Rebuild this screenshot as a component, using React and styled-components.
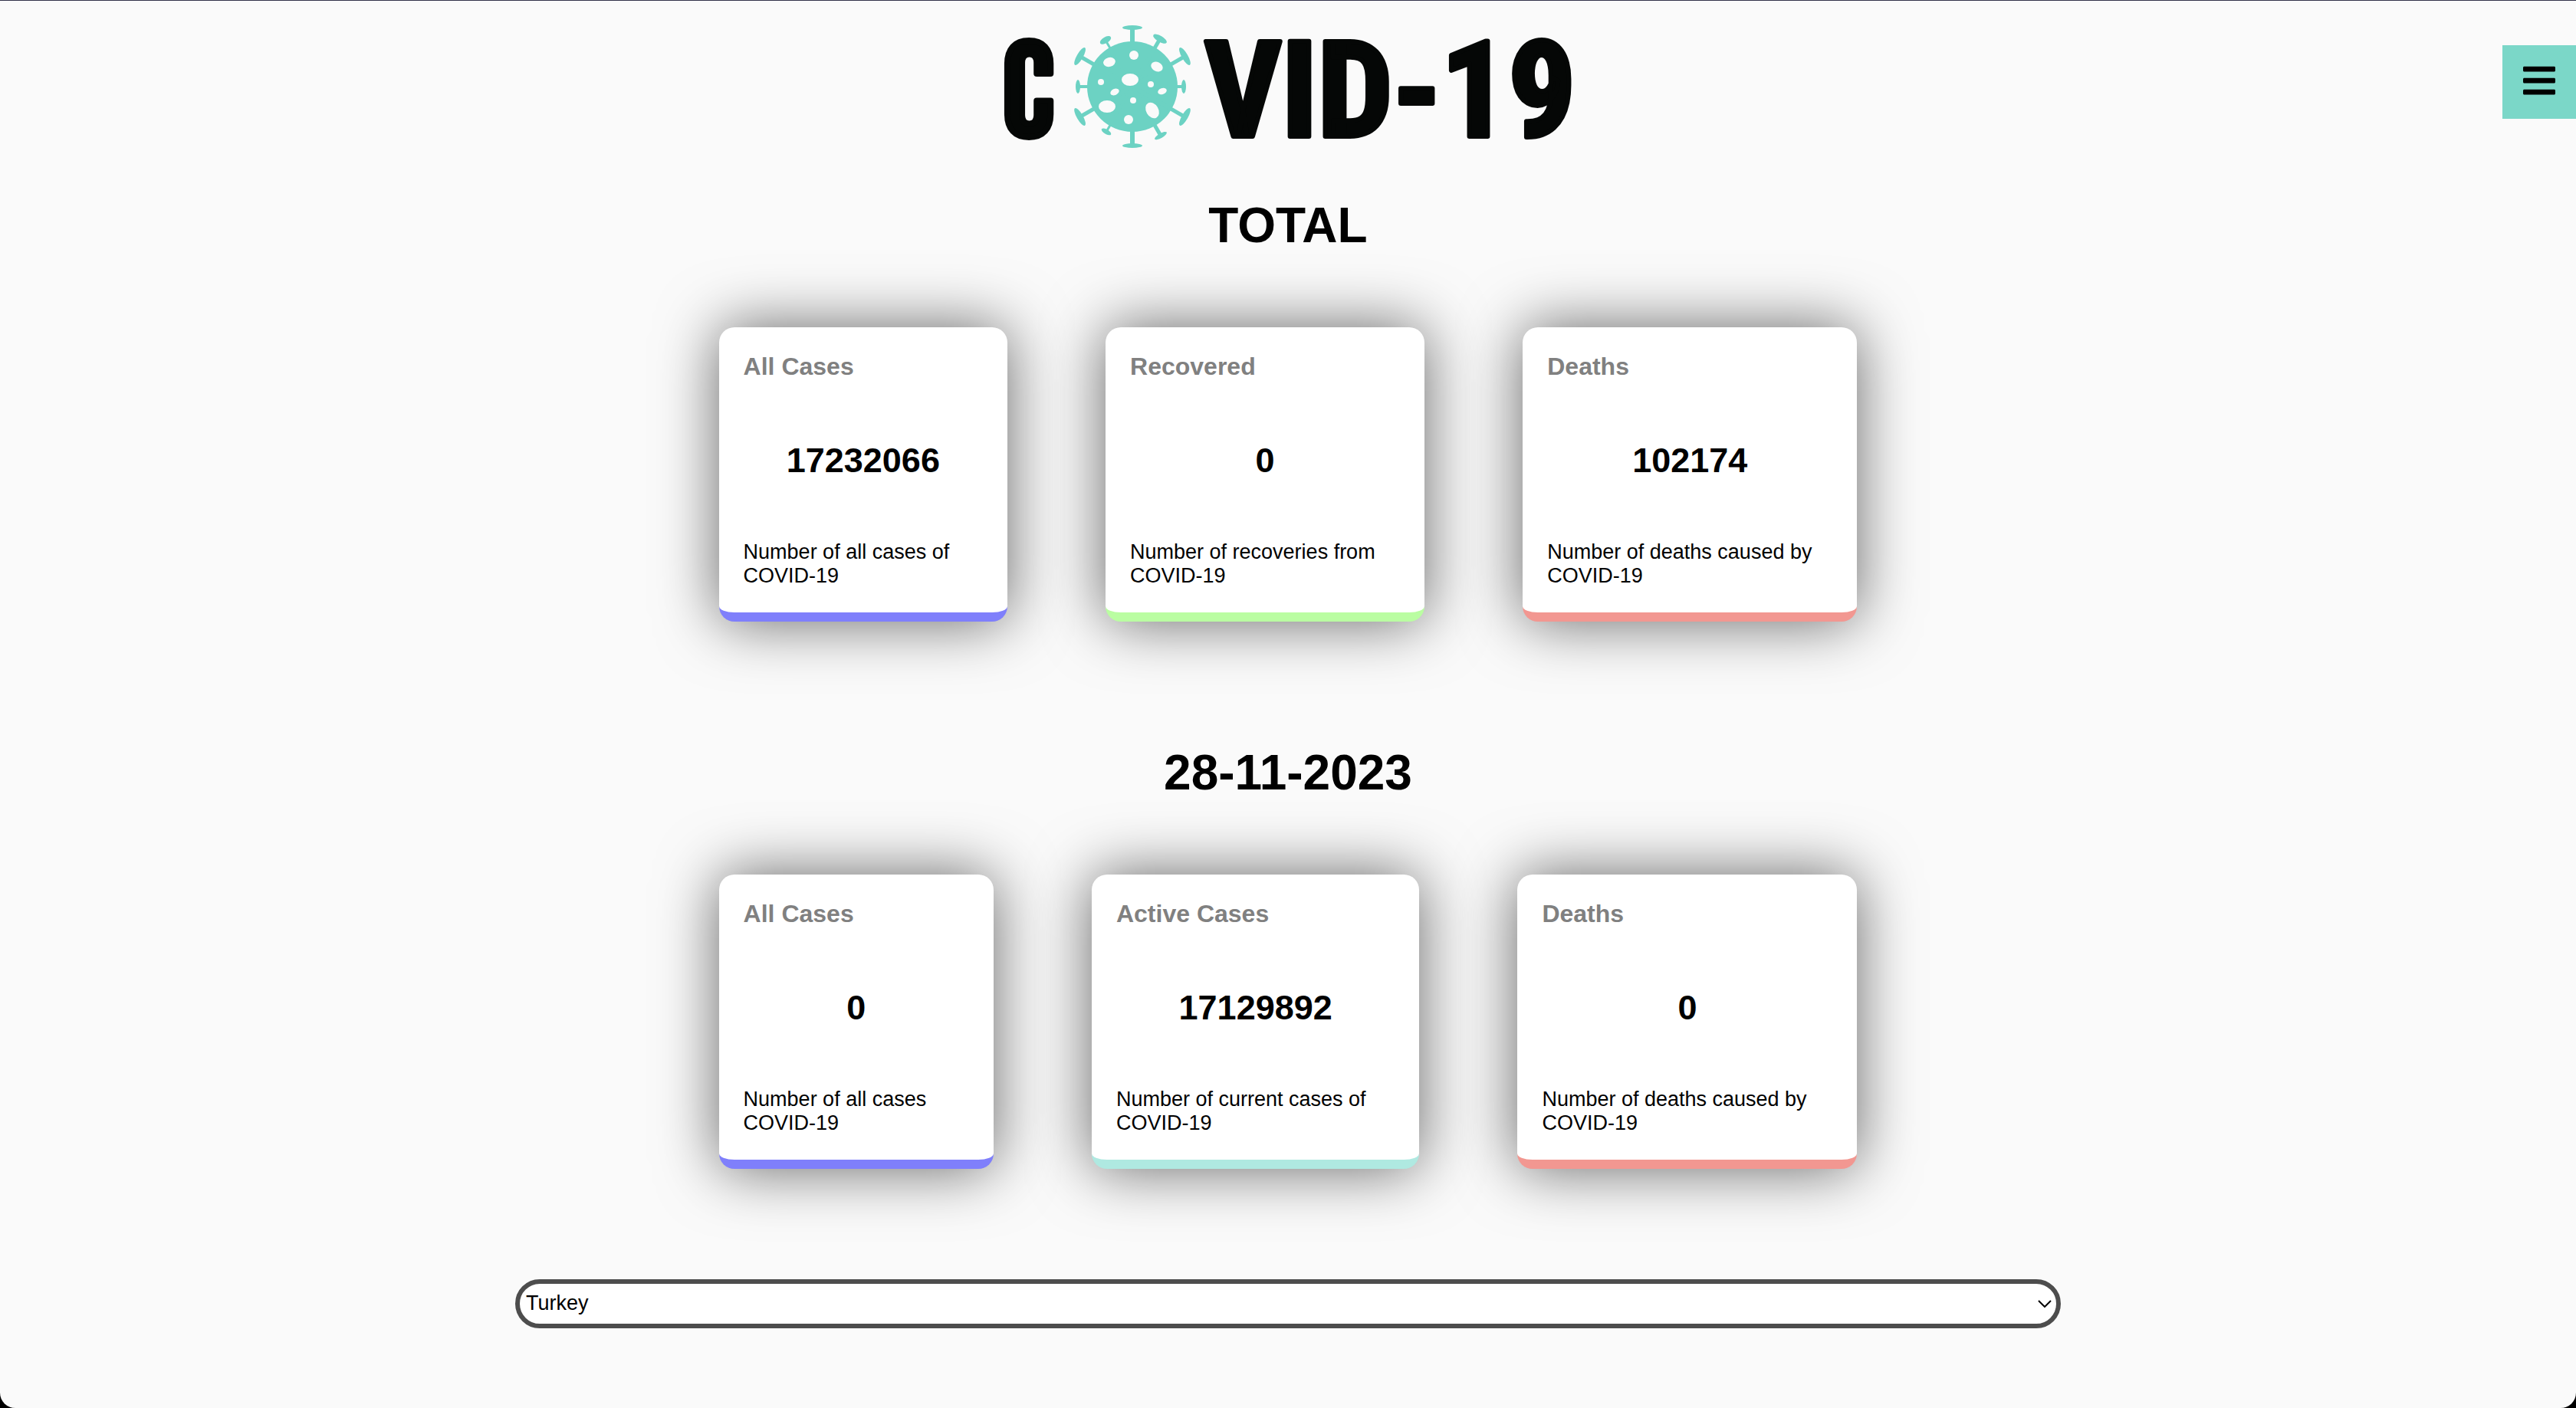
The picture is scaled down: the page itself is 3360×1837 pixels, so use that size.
import React from "react";
import styled, { createGlobalStyle } from "styled-components";
import { FaBars } from "react-icons/fa";

const GlobalStyle = createGlobalStyle`
  *, *::before, *::after { box-sizing: border-box; }
  body {
    margin: 0;
    background: #000;
    font-family: "Liberation Sans", Arial, Helvetica, sans-serif;
    color: #000;
  }
  h1, h2, h3, p { margin: 0; }
`;

const Page = styled.div`
  min-height: 100vh;
  display: flex;
  flex-direction: column;
  align-items: center;
  padding-top: 32px;
  background: #fafafa;
  border-top: 1px solid #33334a;
  border-radius: 0 0 20px 20px;
`;

const Logo = styled.svg`
  display: block;
  width: 760px;
  height: 160px;
  overflow: visible;
`;

const LogoText = styled.text`
  font-family: ${(p) => (p.$narrow ? '"Bebas Neue", ' : "")}"Roboto Condensed", "Liberation Sans", sans-serif;
  font-size: 174px;
  font-weight: ${(p) => (p.$narrow ? 400 : 700)};
  fill: #050706;
  stroke: #050706;
  stroke-width: ${(p) => (p.$narrow ? 8 : 6)}px;
  stroke-linejoin: round;
`;

const MenuButton = styled.button`
  position: fixed;
  top: 59px;
  right: 0;
  width: 96px;
  height: 96px;
  display: flex;
  align-items: center;
  justify-content: center;
  padding: 0 0 4px;
  border: 0;
  background: #7bd7c8;
  color: #000;
  cursor: pointer;
`;

const Main = styled.main`
  width: 60%;
  display: flex;
  flex-direction: column;
  align-items: center;
`;

const Section = styled.section`
  width: 80%;
  display: flex;
  flex-direction: column;
  align-items: center;
  gap: 96px;
  padding-top: 64px;
  padding-bottom: 96px;
`;

const Title = styled.h1`
  font-size: 64px;
  line-height: 74px;
  font-weight: 700;
`;

const Cards = styled.div`
  width: 100%;
  display: flex;
  gap: 128px;
  padding: 0 64px;
`;

const Card = styled.article`
  display: flex;
  flex-direction: column;
  gap: 78px;
  padding: 32px;
  background: #fff;
  border-bottom: 12px solid ${(p) => p.$accent};
  border-radius: 20px;
  box-shadow: 0 0 80px rgba(0, 0, 0, 0.6);
`;

const CardLabel = styled.h2`
  font-size: 32px;
  line-height: 38px;
  font-weight: 700;
  color: #808080;
`;

const CardValue = styled.h3`
  font-size: 45px;
  line-height: 52px;
  font-weight: 700;
  text-align: center;
`;

const CardText = styled.p`
  font-size: 27px;
  line-height: 31px;
`;

const SelectWrap = styled.div`
  width: 100%;
  display: grid;
  align-items: center;
  margin-top: 48px;
  margin-bottom: 104px;

  > * { grid-area: 1 / 1; }
`;

const CountrySelect = styled.select`
  width: 100%;
  height: 64px;
  padding: 0 48px 2px 8px;
  border: 6px solid #4d4d4d;
  border-radius: 32px;
  background: #fff;
  color: #000;
  font-family: inherit;
  font-size: 27px;
  appearance: none;
`;

const Chevron = styled.svg`
  width: 18px;
  height: 10px;
  margin-right: 12px;
  justify-self: end;
  pointer-events: none;
`;

const TEAL = "#6cd2c3";

function Spike({ angle, reach, foot, thick, stem }) {
  return (
    <g transform={`rotate(${angle} 177 80)`}>
      <rect x={177 - stem / 2} y={80 - reach} width={stem} height={reach} />
      <ellipse cx="177" cy={80 - reach} rx={foot} ry={thick} />
    </g>
  );
}

const spikes = [
  { angle: 0, reach: 77, foot: 13, thick: 3, stem: 6 },
  { angle: 180, reach: 77, foot: 13, thick: 3, stem: 6 },
  { angle: 60, reach: 79, foot: 13, thick: 4, stem: 5 },
  { angle: 120, reach: 79, foot: 13, thick: 4, stem: 5 },
  { angle: 240, reach: 79, foot: 13, thick: 4, stem: 5 },
  { angle: 300, reach: 79, foot: 13, thick: 4, stem: 5 },
  { angle: 90, reach: 67, foot: 9, thick: 3, stem: 4 },
  { angle: 270, reach: 71, foot: 9, thick: 3, stem: 4 },
  { angle: 30, reach: 72, foot: 10, thick: 4, stem: 5 },
  { angle: 150, reach: 74, foot: 9, thick: 3, stem: 5 },
  { angle: 210, reach: 68, foot: 7, thick: 3, stem: 3 },
  { angle: 330, reach: 70, foot: 8, thick: 4, stem: 3 },
];

const craters = [
  [179, 39, 6, 6, 0],
  [147, 48, 8, 6, -15],
  [209, 54, 8, 6, 25],
  [174, 71, 11, 8, 0],
  [136, 74, 4, 4, 0],
  [201, 77, 4, 4, 0],
  [154, 87, 6, 4, -25],
  [216, 86, 6, 4, -20],
  [178, 98, 4, 4, 0],
  [144, 106, 11, 8, 0],
  [203, 111, 8, 11, -30],
  [172, 123, 6, 6, 0],
];

function CovidLogo() {
  return (
    <Logo viewBox="0 0 760 160" role="img" aria-label="COVID-19">
      <LogoText $narrow x="8" y="144">C</LogoText>
      <g fill={TEAL}>
        <circle cx="177" cy="80" r="59" />
        {spikes.map((s) => (
          <Spike key={s.angle} {...s} />
        ))}
      </g>
      <g fill="#fafafa">
        {craters.map(([cx, cy, rx, ry, turn]) => (
          <ellipse key={`${cx}-${cy}`} cx={cx} cy={cy} rx={rx} ry={ry} transform={`rotate(${turn} ${cx} ${cy})`} />
        ))}
      </g>
      <LogoText x="271" y="145">VID-19</LogoText>
    </Logo>
  );
}

const totals = [
  { label: "All Cases", value: "17232066", text: "Number of all cases of COVID-19", accent: "#7f7ffb" },
  { label: "Recovered", value: "0", text: "Number of recoveries from COVID-19", accent: "#bafda2" },
  { label: "Deaths", value: "102174", text: "Number of deaths caused by COVID-19", accent: "#f29791" },
];

const daily = [
  { label: "All Cases", value: "0", text: "Number of all cases COVID-19", accent: "#7f7ffb" },
  { label: "Active Cases", value: "17129892", text: "Number of current cases of COVID-19", accent: "#afe9e1" },
  { label: "Deaths", value: "0", text: "Number of deaths caused by COVID-19", accent: "#f29791" },
];

function Stats({ title, items }) {
  return (
    <Section>
      <Title>{title}</Title>
      <Cards>
        {items.map((item) => (
          <Card key={item.label} $accent={item.accent}>
            <CardLabel>{item.label}</CardLabel>
            <CardValue>{item.value}</CardValue>
            <CardText>{item.text}</CardText>
          </Card>
        ))}
      </Cards>
    </Section>
  );
}

export default function App() {
  return (
    <Page>
      <GlobalStyle />
      <MenuButton type="button" aria-label="Open menu">
        <FaBars size={48} />
      </MenuButton>
      <CovidLogo />
      <Main>
        <Stats title="TOTAL" items={totals} />
        <Stats title="28-11-2023" items={daily} />
        <SelectWrap>
          <CountrySelect aria-label="Country" defaultValue="Turkey">
            <option>Turkey</option>
          </CountrySelect>
          <Chevron viewBox="0 0 18 10" fill="none" stroke="#000" strokeWidth="2" aria-hidden="true">
            <path d="M1 1L9 9L17 1" />
          </Chevron>
        </SelectWrap>
      </Main>
    </Page>
  );
}
